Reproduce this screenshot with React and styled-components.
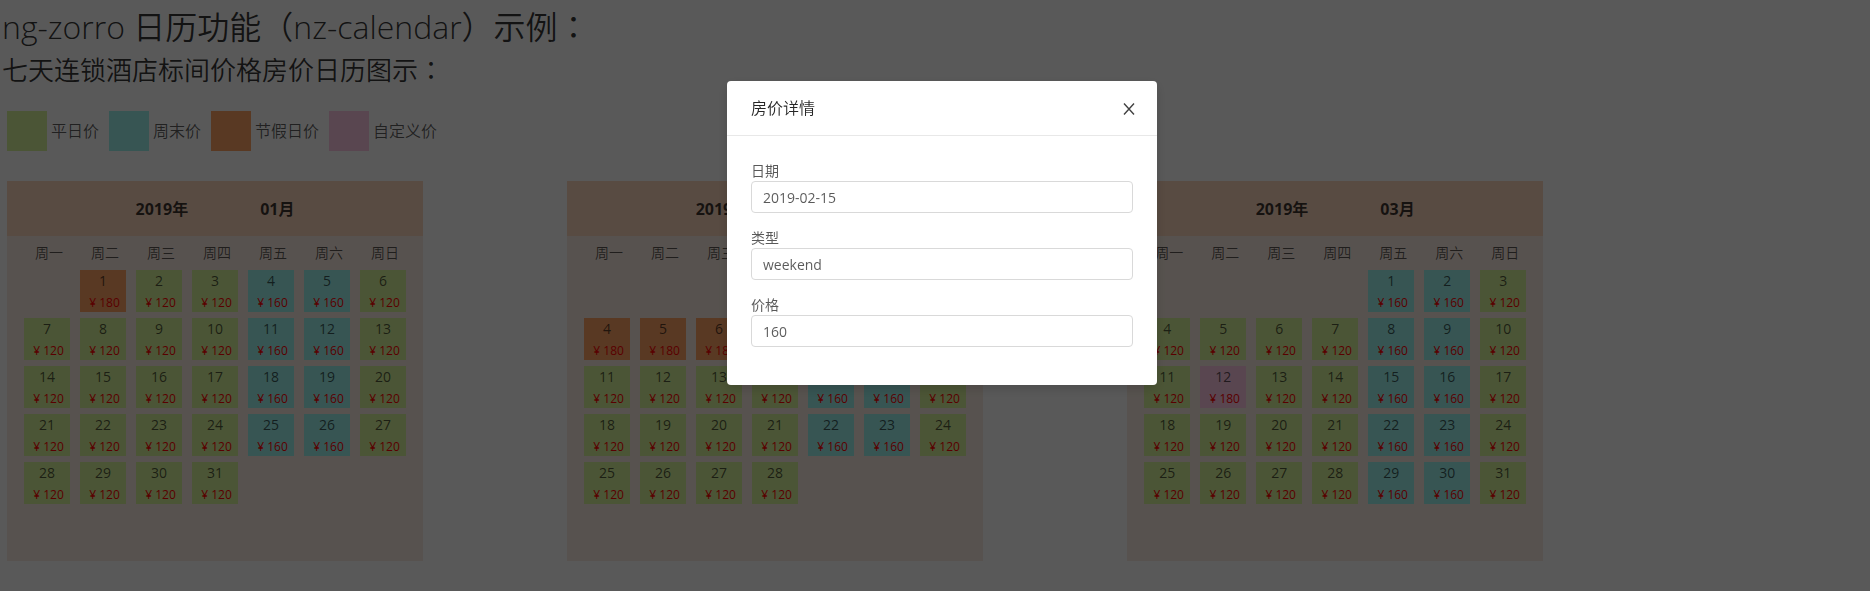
import React from 'react';
import styled, { createGlobalStyle } from 'styled-components';

const prices = { weekday: 120, weekend: 160, holiday: 180, custom: 180 };
const colors = {
  weekday: '#d8f39a',
  weekend: '#9df3ee',
  holiday: '#ffa366',
  custom: '#ffc8e6',
};

const Global = createGlobalStyle`
  *, *::before, *::after { box-sizing: border-box; }
  body {
    margin: 0;
    overflow: hidden;
    background: #fff;
    color: rgba(0, 0, 0, 0.65);
    font: 14px/21px "Open Sans", "Noto Sans CJK SC", sans-serif;
  }
`;

const Page = styled.main`
  height: 100vh;
  overflow: hidden;
`;

const Title = styled.h1`
  margin: 0 2px;
  font-size: 32px;
  line-height: 54px;
  font-weight: 350;
  color: rgba(0, 0, 0, 0.8);
`;

const Subtitle = styled.h2`
  margin: 0 2px;
  font-size: 26px;
  line-height: 32px;
  font-weight: 350;
  color: rgba(0, 0, 0, 0.8);
`;

/* Traditional face sets the full-width colon in the middle of its square. */
const Colon = styled.span`
  font-family: "Noto Sans CJK TC", sans-serif;
  line-height: 1;
`;

const Legend = styled.ul`
  display: flex;
  gap: 10px;
  margin: 25px 7px 30px;
  padding: 0;
  list-style: none;
`;

const LegendItem = styled.li`
  display: flex;
  align-items: center;
  gap: 4px;
  font-size: 16px;
  font-weight: 350;
`;

const Swatch = styled.span`
  width: 40px;
  height: 40px;
  background: ${({ $kind }) => colors[$kind]};
`;

const Months = styled.div`
  display: grid;
  grid-template-columns: repeat(3, 30%);
  padding-right: 3px;
`;

const Month = styled.section`
  width: 416px;
  min-height: 380px;
  margin-left: 7px;
  background: #faece2;
`;

const MonthHeader = styled.header`
  display: flex;
  justify-content: center;
  gap: 72px;
  height: 55px;
  padding-top: 1px;
  font-size: 16px;
  line-height: 54px;
  font-weight: 700;
  color: rgba(0, 0, 0, 0.75);
  background: #fbd6bd;
`;

const Days = styled.table`
  width: 392px;
  margin: 0 12px;
  border-collapse: collapse;
  table-layout: fixed;
`;

const Weekday = styled.th`
  height: 31px;
  padding: 2px 0 0 4px;
  font-weight: 350;
`;

const DayCell = styled.td`
  height: 48px;
  padding: 3px 5px;
`;

const Day = styled.div`
  height: 42px;
  text-align: center;
  background: ${({ $kind }) => colors[$kind]};
`;

const Price = styled.div`
  padding: 1px 0 0 3px;
  font-size: 12px;
  color: #f00;
`;

const Mask = styled.div`
  position: fixed;
  inset: 0;
  display: flex;
  justify-content: center;
  align-items: flex-start;
  padding: 81px 0 0 14px;
  background: rgba(0, 0, 0, 0.65);
`;

const Dialog = styled.div`
  width: 430px;
  border-radius: 4px;
  background: #fff;
  box-shadow: 0 4px 12px rgba(0, 0, 0, 0.15);
`;

const DialogHeader = styled.div`
  display: flex;
  justify-content: space-between;
  align-items: center;
  height: 55px;
  padding: 0 20px 0 24px;
  border-bottom: 1px solid #e8e8e8;
`;

const DialogTitle = styled.h3`
  margin: 0;
  font-size: 16px;
  font-weight: 350;
  color: rgba(0, 0, 0, 0.85);
`;

const Close = styled.button`
  display: flex;
  padding: 2px 1px 0;
  border: 0;
  background: none;
  color: rgba(0, 0, 0, 0.75);
`;

const Form = styled.form`
  display: grid;
  gap: 14px;
  padding: 24px 24px 38px;
`;

const Field = styled.label`
  display: block;
`;

const Input = styled.input`
  display: block;
  width: 100%;
  height: 32px;
  padding: 4px 11px;
  border: 1px solid #d9d9d9;
  border-radius: 4px;
  font: inherit;
  color: inherit;
`;

const weekdays = ['周一', '周二', '周三', '周四', '周五', '周六', '周日'];

const months = [
  { name: '01月', offset: 1, days: 31, holiday: [1], custom: [] },
  { name: '02月', offset: 4, days: 28, holiday: [4, 5, 6, 7, 8, 9, 10], custom: [] },
  { name: '03月', offset: 4, days: 31, holiday: [], custom: [12] },
];

const legend = [
  ['weekday', '平日价'],
  ['weekend', '周末价'],
  ['holiday', '节假日价'],
  ['custom', '自定义价'],
];

function kindOf(month, day, column) {
  if (month.custom.includes(day)) return 'custom';
  if (month.holiday.includes(day)) return 'holiday';
  return column === 4 || column === 5 ? 'weekend' : 'weekday';
}

function MonthCard({ month }) {
  const rows = [];
  for (let start = 1 - month.offset; start <= month.days; start += 7) {
    rows.push(weekdays.map((_, column) => start + column));
  }
  return (
    <Month>
      <MonthHeader>
        <span>2019年</span>
        <span>{month.name}</span>
      </MonthHeader>
      <Days>
        <thead>
          <tr>{weekdays.map((name) => <Weekday key={name}>{name}</Weekday>)}</tr>
        </thead>
        <tbody>
          {rows.map((row) => (
            <tr key={row[0]}>
              {row.map((day, column) => {
                const kind = kindOf(month, day, column);
                return (
                  <DayCell key={day}>
                    {day > 0 && day <= month.days && (
                      <Day $kind={kind}>
                        {day}
                        <Price>¥ {prices[kind]}</Price>
                      </Day>
                    )}
                  </DayCell>
                );
              })}
            </tr>
          ))}
        </tbody>
      </Days>
    </Month>
  );
}

export default function App() {
  return (
    <>
      <Global />
      <Page>
        <Title>ng-zorro 日历功能（nz-calendar）示例<Colon>：</Colon></Title>
        <Subtitle>七天连锁酒店标间价格房价日历图示<Colon>：</Colon></Subtitle>
        <Legend>
          {legend.map(([kind, label]) => (
            <LegendItem key={kind}>
              <Swatch $kind={kind} />
              {label}
            </LegendItem>
          ))}
        </Legend>
        <Months>
          {months.map((month) => <MonthCard key={month.name} month={month} />)}
        </Months>
      </Page>
      <Mask>
        <Dialog role="dialog" aria-modal="true" aria-labelledby="dialog-title">
          <DialogHeader>
            <DialogTitle id="dialog-title">房价详情</DialogTitle>
            <Close type="button" aria-label="关闭">
              <svg width="14" height="14" viewBox="0 0 14 14" fill="none" stroke="currentColor" strokeWidth="1.4">
                <path d="M2 1.5 12 12.5M12 1.5 2 12.5" />
              </svg>
            </Close>
          </DialogHeader>
          <Form>
            <Field>日期<Input defaultValue="2019-02-15" /></Field>
            <Field>类型<Input defaultValue="weekend" /></Field>
            <Field>价格<Input defaultValue="160" /></Field>
          </Form>
        </Dialog>
      </Mask>
    </>
  );
}
